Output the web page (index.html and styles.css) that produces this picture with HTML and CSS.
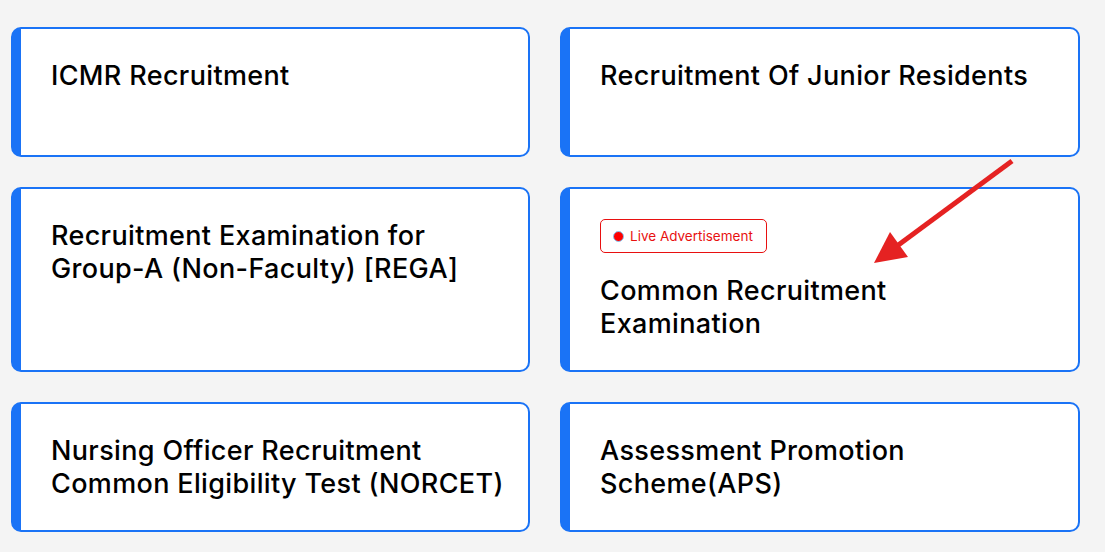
FILE: index.html
```html
<!DOCTYPE html>
<html lang="en">
<head>
<meta charset="utf-8">
<title>Recruitment</title>
<link rel="stylesheet" href="styles.css">
</head>
<body>
<main class="page">
  <div class="grid">
    <a class="card" href="#"><h3 class="title">ICMR Recruitment</h3></a>
    <a class="card" href="#"><h3 class="title">Recruitment Of Junior Residents</h3></a>
    <a class="card" href="#"><h3 class="title">Recruitment Examination for Group-A (Non-Faculty) [REGA]</h3></a>
    <a class="card" href="#">
      <span class="badge"><span class="dot"></span>Live Advertisement</span>
      <h3 class="title">Common Recruitment Examination</h3>
    </a>
    <a class="card card-tight" href="#"><h3 class="title">Nursing Officer Recruitment Common Eligibility Test (NORCET)</h3></a>
    <a class="card" href="#"><h3 class="title">Assessment Promotion Scheme(APS)</h3></a>
  </div>
  <svg class="arrow" width="1105" height="552" viewBox="0 0 1105 552" aria-hidden="true">
    <line x1="1012" y1="161" x2="897" y2="246" stroke="#e52222" stroke-width="5"/>
    <polygon points="874,263 890,232 908,257" fill="#e52222"/>
  </svg>
</main>
</body>
</html>
```
FILE: styles.css
```css
* { box-sizing: border-box; }
html, body { margin: 0; padding: 0; }
body {
  background: #f4f4f4;
  font-family: "Inter", "Noto Sans", sans-serif;
  color: #000;
}
.page {
  position: relative;
  width: 1105px;
  height: 552px;
  padding: 27px 0 0 11px;
}
.grid {
  display: grid;
  grid-template-columns: 519px 520px;
  column-gap: 30px;
  row-gap: 30px;
}
.card {
  display: block;
  background: #fff;
  border: 2px solid #1a73f6;
  border-left-width: 10px;
  border-radius: 10px;
  padding: 30px;
  text-decoration: none;
  color: #000;
}
.card-tight {
  padding-right: 6px;
}
.title {
  margin: 0;
  font-size: 27px;
  font-weight: 500;
  line-height: 33px;
  min-height: 66px;
  letter-spacing: 0.35px;
}
.badge {
  display: inline-flex;
  align-items: center;
  gap: 6px;
  height: 34px;
  padding: 0 13px 0 12px;
  border: 1px solid #e81010;
  border-radius: 5px;
  color: #e81010;
  font-size: 13.5px;
  font-weight: 400;
  margin-bottom: 21px;
}
.dot {
  width: 11px;
  height: 11px;
  border-radius: 50%;
  background: #f00;
  border: 1.5px solid #86c6f2;
}
.arrow {
  position: absolute;
  left: 0;
  top: 0;
  pointer-events: none;
}
```
